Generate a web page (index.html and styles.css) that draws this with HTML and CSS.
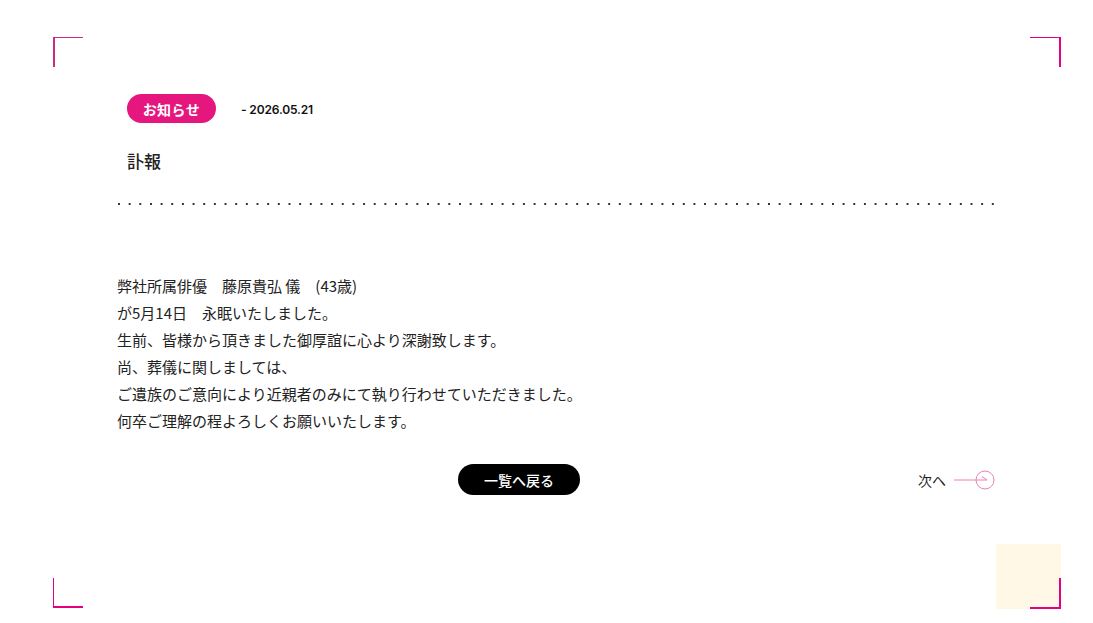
FILE: index.html
```html
<!DOCTYPE html>
<html lang="ja">
<head>
<meta charset="utf-8">
<link rel="stylesheet" href="styles.css">
</head>
<body>
<div class="corner corner-tl"></div>
<div class="corner corner-tr"></div>
<div class="corner corner-bl"></div>
<div class="cream"></div>
<div class="corner corner-br"></div>
<main class="page">
  <div class="meta">
    <span class="badge">お知らせ</span>
    <span class="date">- 2026.05.21</span>
  </div>
  <h1 class="title">訃報</h1>
  <div class="dots"></div>
  <div class="body">
    <p>弊社所属俳優　藤原貴弘 儀　(43歳)</p>
    <p>が5月14日　永眠いたしました。</p>
    <p>生前、皆様から頂きました御厚誼に心より深謝致します。</p>
    <p>尚、葬儀に関しましては、</p>
    <p>ご遺族のご意向により近親者のみにて執り行わせていただきました。</p>
    <p>何卒ご理解の程よろしくお願いいたします。</p>
  </div>
  <nav class="nav">
    <a class="back" href="#">一覧へ戻る</a>
    <a class="next" href="#">次へ
      <svg class="arrow" width="42" height="22" viewBox="0 0 42 22">
        <line x1="0" y1="11" x2="33" y2="11" stroke="#ee7fb6" stroke-width="1"/>
        <circle cx="31" cy="11" r="9" fill="none" stroke="#ee7fb6" stroke-width="1"/>
        <line x1="28" y1="7.5" x2="33" y2="11" stroke="#ee7fb6" stroke-width="1"/>
      </svg>
    </a>
  </nav>
</main>
</body>
</html>
```
FILE: styles.css
```css
html, body {
  margin: 0;
  padding: 0;
  background: #fff;
}
body {
  font-family: "Noto Sans CJK JP", "Noto Sans", sans-serif;
  color: #222;
  position: relative;
  min-height: 623px;
  overflow: hidden;
}
.corner {
  position: absolute;
  width: 30px;
  height: 30px;
  box-sizing: border-box;
  border-color: #e4007f;
  border-style: solid;
  border-width: 0;
}
.corner-tl {
  left: 53px;
  top: 37px;
  border-top-width: 1px;
  border-left-width: 2px;
  border-color: #cc2c80;
}
.corner-tr {
  left: 1030px;
  top: 37px;
  border-top-width: 1px;
  border-right-width: 2px;
  width: 31px;
}
.corner-bl {
  left: 53px;
  top: 578px;
  border-bottom-width: 2px;
  border-left-width: 1px;
}
.corner-br {
  left: 1030px;
  top: 578px;
  border-bottom-width: 2px;
  border-right-width: 2px;
  width: 31px;
  height: 31px;
}
.cream {
  position: absolute;
  left: 996px;
  top: 544px;
  width: 65px;
  height: 65px;
  background: #fff8e7;
}
.page {
  padding: 94px 98px 0 117px;
  width: 878px;
}
.meta {
  display: flex;
  align-items: center;
  gap: 25px;
  padding-left: 10px;
  height: 29px;
}
.badge {
  display: inline-flex;
  align-items: center;
  justify-content: center;
  width: 89px;
  height: 29px;
  border-radius: 15px;
  background: #e5177f;
  color: #fff;
  font-weight: 700;
  font-size: 14px;
  letter-spacing: 0.5px;
}
.date {
  font-family: "Inter", "Lato", sans-serif;
  font-weight: 600;
  font-size: 12px;
  letter-spacing: -0.15px;
  color: #111;
  padding-top: 2px;
}
.title {
  margin: 26px 0 0 10px;
  font-size: 17px;
  line-height: 24px;
  font-weight: 500;
  color: #222;
}
.dots {
  margin-top: 30px;
  margin-left: 1px;
  height: 2px;
  width: 876px;
  background-image: linear-gradient(to right, #333 2px, transparent 2px);
  background-size: 10.67px 2px;
  background-position: 0 0;
  background-repeat: repeat-x;
}
.body {
  margin-top: 67px;
  font-size: 15px;
  line-height: 27px;
  color: #222;
}
.body p {
  margin: 0;
}
.nav {
  margin-top: 30px;
  display: flex;
  align-items: center;
  height: 31px;
}
.back {
  margin-left: 341px;
  width: 122px;
  height: 31px;
  border-radius: 16px;
  background: #000;
  color: #fff;
  font-size: 14px;
  font-weight: 500;
  text-decoration: none;
  display: flex;
  align-items: center;
  justify-content: center;
}
.next {
  margin-left: auto;
  display: flex;
  align-items: center;
  gap: 8px;
  font-size: 14px;
  color: #222;
  text-decoration: none;
}
.arrow {
  display: block;
  margin-right: -1px;
}
```
